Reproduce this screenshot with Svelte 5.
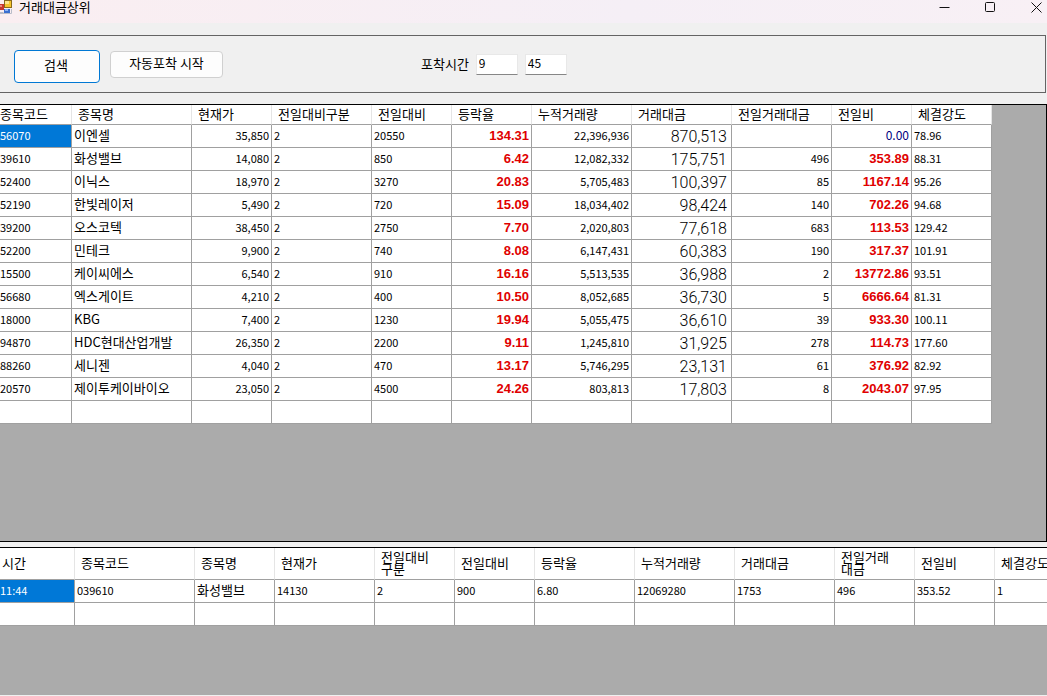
<script lang="ts">
	type Column = { label: string; width: number; kind?: string };

	let hour = $state('9');
	let minute = $state('45');

	const topColumns: Column[] = [
		{ label: '종목코드', width: 72, kind: 'code' },
		{ label: '종목명', width: 120, kind: 'name' },
		{ label: '현재가', width: 80, kind: 'num' },
		{ label: '전일대비구분', width: 100 },
		{ label: '전일대비', width: 80 },
		{ label: '등락율', width: 80, kind: 'rate' },
		{ label: '누적거래량', width: 100, kind: 'num' },
		{ label: '거래대금', width: 100, kind: 'amount' },
		{ label: '전일거래대금', width: 100, kind: 'num' },
		{ label: '전일비', width: 80, kind: 'rate' },
		{ label: '체결강도', width: 80 }
	];

	const topRows = [
		['56070', '이엔셀', '35,850', '2', '20550', '134.31', '22,396,936', '870,513', '', '0.00', '78.96'],
		['39610', '화성밸브', '14,080', '2', '850', '6.42', '12,082,332', '175,751', '496', '353.89', '88.31'],
		['52400', '이닉스', '18,970', '2', '3270', '20.83', '5,705,483', '100,397', '85', '1167.14', '95.26'],
		['52190', '한빛레이저', '5,490', '2', '720', '15.09', '18,034,402', '98,424', '140', '702.26', '94.68'],
		['39200', '오스코텍', '38,450', '2', '2750', '7.70', '2,020,803', '77,618', '683', '113.53', '129.42'],
		['52200', '민테크', '9,900', '2', '740', '8.08', '6,147,431', '60,383', '190', '317.37', '101.91'],
		['15500', '케이씨에스', '6,540', '2', '910', '16.16', '5,513,535', '36,988', '2', '13772.86', '93.51'],
		['56680', '엑스게이트', '4,210', '2', '400', '10.50', '8,052,685', '36,730', '5', '6666.64', '81.31'],
		['18000', 'KBG', '7,400', '2', '1230', '19.94', '5,055,475', '36,610', '39', '933.30', '100.11'],
		['94870', 'HDC현대산업개발', '26,350', '2', '2200', '9.11', '1,245,810', '31,925', '278', '114.73', '177.60'],
		['88260', '세니젠', '4,040', '2', '470', '13.17', '5,746,295', '23,131', '61', '376.92', '82.92'],
		['20570', '제이투케이바이오', '23,050', '2', '4500', '24.26', '803,813', '17,803', '8', '2043.07', '97.95'],
		['', '', '', '', '', '', '', '', '', '', '']
	];

	const logColumns: Column[] = [
		{ label: '시간', width: 75, kind: 'time' },
		{ label: '종목코드', width: 120 },
		{ label: '종목명', width: 80, kind: 'name' },
		{ label: '현재가', width: 100 },
		{ label: '전일대비\n구분', width: 80 },
		{ label: '전일대비', width: 80 },
		{ label: '등락율', width: 100 },
		{ label: '누적거래량', width: 100 },
		{ label: '거래대금', width: 100 },
		{ label: '전일거래\n대금', width: 80 },
		{ label: '전일비', width: 80 },
		{ label: '체결강도', width: 80 }
	];

	const logRows = [
		['11:44', '039610', '화성밸브', '14130', '2', '900', '6.80', '12069280', '1753', '496', '353.52', '1'],
		['', '', '', '', '', '', '', '', '', '', '', '']
	];

	function tableWidth(columns: Column[]) {
		return columns.reduce((sum, c) => sum + c.width, 0);
	}
</script>

{#snippet grid(columns: Column[], rows: string[][])}
	<table style:width="{tableWidth(columns)}px">
		<colgroup>
			{#each columns as col}
				<col style:width="{col.width}px" />
			{/each}
		</colgroup>
		<thead>
			<tr>
				{#each columns as col}
					<th scope="col" class={col.kind}>{col.label}</th>
				{/each}
			</tr>
		</thead>
		<tbody>
			{#each rows as row, r}
				<tr>
					{#each row as cell, c}
						<td
							class={columns[c].kind}
							class:selected={r === 0 && c === 0}
							class:zero={cell === '0.00'}
						>{cell}</td>
					{/each}
				</tr>
			{/each}
		</tbody>
	</table>
{/snippet}

<div class="window">
	<header class="titlebar">
		<svg class="app-icon" width="12" height="14" viewBox="0 0 12 14" aria-hidden="true">
			<rect x="0" y="4" width="4" height="6" fill="#c8372d" />
			<rect x="0" y="5" width="2" height="2" fill="#ee8a80" />
			<rect x="4" y="0" width="8" height="8" fill="#8a6a1c" />
			<rect x="5" y="1" width="6" height="6" fill="#f6c42c" />
			<rect x="5" y="1" width="4" height="3" fill="#fde58a" />
			<rect x="4" y="9" width="6" height="4" fill="#3a6fd0" />
			<rect x="5" y="9" width="3" height="2" fill="#8fb4f2" />
			<path d="M0 12.5H3.5M11.5 9V13.5H0" fill="none" stroke="#b9bdc9" />
		</svg>
		<h1>거래대금상위</h1>
		<div class="window-buttons">
			<button type="button" aria-label="최소화">
				<svg width="11" height="11" viewBox="0 0 11 11"><path d="M0.5 5.5H10.5" /></svg>
			</button>
			<button type="button" aria-label="최대화">
				<svg width="11" height="11" viewBox="0 0 11 11"><rect x="0.5" y="0.5" width="9" height="9" rx="1" /></svg>
			</button>
			<button type="button" aria-label="닫기">
				<svg width="11" height="11" viewBox="0 0 11 11"><path d="M0.5 0.5L10.5 10.5M10.5 0.5L0.5 10.5" /></svg>
			</button>
		</div>
	</header>

	<section class="toolbar">
		<button type="button" class="btn search">검색</button>
		<button type="button" class="btn auto">자동포착 시작</button>
		<div class="capture-time">
			<label for="hour">포착시간</label>
			<input id="hour" type="text" bind:value={hour} />
			<input type="text" aria-label="포착시간 분" bind:value={minute} />
		</div>
	</section>

	<main class="grid-view top">
		{@render grid(topColumns, topRows)}
	</main>

	<section class="grid-view log">
		{@render grid(logColumns, logRows)}
	</section>
</div>

<style>
	:global(body) {
		background: #f0f0f0;
	}

	.window {
		display: flex;
		flex-direction: column;
		height: 100vh;
		overflow: hidden;
		background: #f0f0f0;
		color: #000;
		font-family: 'Noto Sans CJK KR', sans-serif;
		font-size: 13px;
		line-height: 16px;
	}

	.titlebar {
		display: flex;
		align-items: flex-start;
		flex: none;
		height: 23px;
		background: linear-gradient(90deg, #faeef1, #f5eff6 60%, #f8f0f5);
	}

	.app-icon {
		flex: none;
	}

	h1 {
		margin: 0 auto 0 7px;
		font-size: 13px;
		font-weight: 400;
		line-height: 14px;
	}

	.window-buttons {
		display: flex;
	}

	.window-buttons button {
		display: flex;
		justify-content: flex-end;
		width: 46px;
		height: 14px;
		padding: 2px 5px 0 0;
		border: 0;
		background: none;
	}

	.window-buttons svg {
		fill: none;
		stroke: #111;
	}

	.toolbar {
		display: flex;
		align-items: flex-start;
		flex: none;
		height: 42px;
		margin: 12px 1px 11px 0;
		padding: 14px 0 0 14px;
		border: 1px solid #646464;
		border-left: 0;
	}

	.btn {
		border: 1px solid #d0d0d0;
		border-radius: 4px;
		background: #fdfdfd;
		color: #000;
		font: inherit;
	}

	.search {
		width: 86px;
		height: 33px;
		padding: 0 8px 4px 6px;
		border-color: #0078d4;
	}

	.auto {
		width: 113px;
		height: 27px;
		margin: 1px 0 0 10px;
		padding-bottom: 4px;
	}

	.capture-time {
		display: flex;
		align-items: flex-start;
		gap: 7px;
		margin: 4px 0 0 198px;
	}

	label {
		padding-top: 2px;
	}

	input {
		box-sizing: border-box;
		width: 42px;
		height: 21px;
		padding: 0 2px 4px;
		border: 1px solid #e8e8e8;
		border-bottom-color: #868686;
		background: #fff;
		color: #000;
		font: inherit;
		font-size: 12px;
	}

	.grid-view {
		overflow: hidden;
		border-top: 1px solid #000;
		background: #ababab;
	}

	.top {
		flex: 1;
		border-right: 1px solid #000;
		border-bottom: 1px solid #000;
	}

	.log {
		flex: none;
		height: 147px;
		margin: 5px 0 1px;
	}

	table {
		table-layout: fixed;
		border-collapse: separate;
		border-spacing: 0;
	}

	th,
	td {
		box-sizing: border-box;
		overflow: hidden;
		border-right: 1px solid #a0a0a0;
		border-bottom: 1px solid #a0a0a0;
		background: #fff;
		white-space: nowrap;
	}

	th {
		height: 20px;
		padding: 0 0 2px 6px;
		border-right-color: #e5e5e5;
		font-weight: 400;
		line-height: 17px;
		text-align: left;
	}

	.log th {
		height: 32px;
		line-height: 12px;
		white-space: pre-line;
	}

	td {
		height: 23px;
		padding: 0 2px 2px;
		font-size: 11px;
	}

	td.name {
		font-size: 13px;
	}

	.code,
	td.time {
		padding-left: 0;
	}

	.log th.time {
		padding-left: 2px;
	}

	td.num,
	td.rate,
	td.amount {
		text-align: right;
	}

	td.rate {
		padding-bottom: 0;
		color: #e00000;
		font-family: 'Liberation Sans', sans-serif;
		font-size: 13px;
		font-weight: 700;
	}

	td.rate.zero {
		padding-bottom: 2px;
		color: #000080;
		font-family: 'Noto Sans CJK KR', sans-serif;
		font-size: 12px;
		font-weight: 400;
	}

	td.amount {
		padding: 2px 4px 0;
		font-family: Roboto, sans-serif;
		font-size: 16px;
		font-weight: 300;
	}

	td.selected {
		background: #0078d7;
		color: #fff;
	}
</style>
